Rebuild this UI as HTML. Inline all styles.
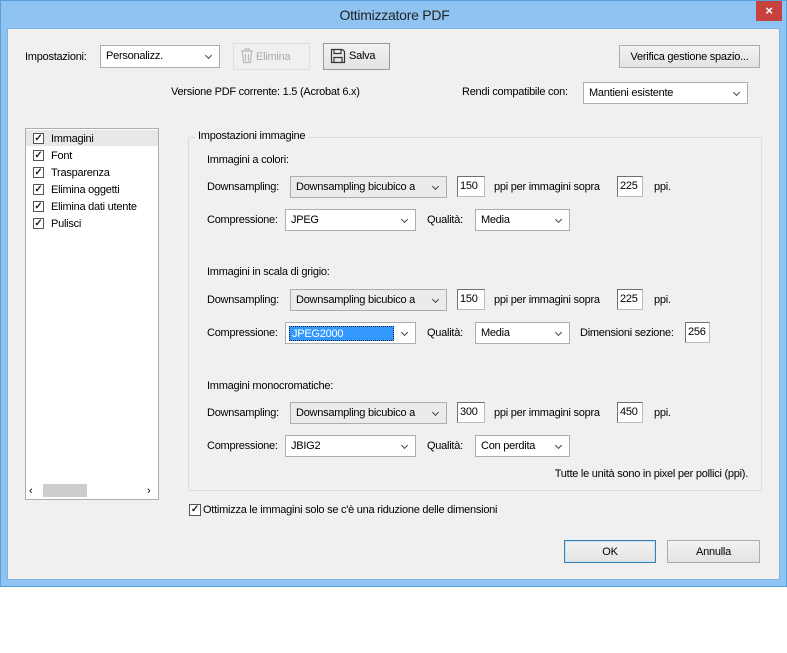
<!DOCTYPE html>
<html><head><meta charset="utf-8"><style>
*{box-sizing:border-box;margin:0;padding:0}
body{width:787px;height:653px;background:#fff;position:relative;overflow:hidden;font-family:"Liberation Sans",sans-serif;font-size:11px;color:#000;letter-spacing:-0.25px}
.win{position:absolute;left:0;top:0;width:787px;height:587px;background:#8fc4f2;border:1px solid #5a9fd8}
.client{position:absolute;left:7px;top:28px;width:773px;height:552px;background:#f0f0f0;border:1px solid #7fb2e0}
.a{position:absolute;white-space:nowrap}
.sel{position:absolute;height:22px;background:#fff;border:1px solid #adadad;padding:4px 0 0 5px}
.sel::after{content:"";position:absolute;right:8px;top:7px;width:4px;height:4px;border-right:1.5px solid #444;border-bottom:1.5px solid #444;transform:rotate(45deg)}
.sel.dis{background:#ebebeb}
.inp{position:absolute;height:21px;background:#fff;border:1px solid #bbb;border-top-color:#707070;border-left-color:#707070;padding:3px 0 0 2px}
.btn{position:absolute;height:23px;background:linear-gradient(#f2f2f2,#e3e3e3);border:1px solid #acacac;text-align:center;padding-top:5px}
.cb{position:absolute;width:11px;height:11px;border:1px solid #555;background:#fff;font-size:10px;line-height:9px;text-align:center;font-weight:bold;color:#222}
</style></head><body>
<div class="win">
<div class="a" style="left:0;width:787px;top:6px;text-align:center;font-size:14px;color:#222">Ottimizzatore PDF</div>
<div class="a" style="left:755px;top:0;width:26px;height:20px;background:#c7423f;color:#fff;text-align:center;font-size:13px;line-height:19px;font-weight:bold">×</div>
</div>
<div class="client"></div>

<div class="a" style="left:25px;top:51px">Impostazioni:</div>
<div class="sel" style="left:100px;top:45px;width:120px;height:23px">Personalizz.</div>
<div class="btn" style="left:233px;top:43px;width:77px;height:27px;color:#aaa;background:#f0f0f0;border-color:#ddd;padding-top:7px;text-align:left;padding-left:6px">
<svg width="14" height="16" style="position:absolute;left:6px;top:4px" viewBox="0 0 14 16"><path d="M1 3h12M5 3V1h4v2M2.5 3.5l1 11h7l1-11M5.5 6v7M8.5 6v7" fill="none" stroke="#bbb" stroke-width="1.2"/></svg><span style="margin-left:16px">Elimina</span></div>
<div class="btn" style="left:323px;top:43px;width:67px;height:27px;text-align:left;padding:6px 0 0 25px;border-color:#999">
<svg width="16" height="16" style="position:absolute;left:6px;top:4px" viewBox="0 0 16 16"><path d="M1.5 1.5h11l2 2v11h-13z M4 1.5v4h7v-4 M4 14.5v-5h8v5" fill="none" stroke="#333" stroke-width="1.2"/></svg>Salva</div>
<div class="btn" style="left:619px;top:45px;width:141px">Verifica gestione spazio...</div>

<div class="a" style="left:171px;top:86px">Versione PDF corrente: 1.5 (Acrobat 6.x)</div>
<div class="a" style="left:462px;top:86px">Rendi compatibile con:</div>
<div class="sel" style="left:583px;top:82px;width:165px">Mantieni esistente</div>

<div class="a" style="left:25px;top:128px;width:134px;height:372px;background:#fff;border:1px solid #abadb3"></div>
<div class="a" style="left:26px;top:130px;width:132px;height:16px;background:#e8e8e8"></div>
<div class="cb" style="left:33px;top:133px">✓</div><div class="a" style="left:51px;top:133px">Immagini</div>
<div class="cb" style="left:33px;top:150px">✓</div><div class="a" style="left:51px;top:150px">Font</div>
<div class="cb" style="left:33px;top:167px">✓</div><div class="a" style="left:51px;top:167px">Trasparenza</div>
<div class="cb" style="left:33px;top:184px">✓</div><div class="a" style="left:51px;top:184px">Elimina oggetti</div>
<div class="cb" style="left:33px;top:201px">✓</div><div class="a" style="left:51px;top:201px">Elimina dati utente</div>
<div class="cb" style="left:33px;top:218px">✓</div><div class="a" style="left:51px;top:218px">Pulisci</div>
<div class="a" style="left:29px;top:485px;font-size:11px">‹</div>
<div class="a" style="left:43px;top:484px;width:44px;height:13px;background:#cdcdcd"></div>
<div class="a" style="left:147px;top:485px;font-size:11px">›</div>

<div class="a" style="left:188px;top:137px;width:574px;height:354px;border:1px solid #dcdcdc;border-radius:2px"></div>
<div class="a" style="left:195px;top:130px;background:#f0f0f0;padding:0 3px">Impostazioni immagine</div>

<div class="a" style="left:207px;top:154px">Immagini a colori:</div>
<div class="a" style="left:207px;top:181px">Downsampling:</div>
<div class="sel dis" style="left:290px;top:176px;width:157px">Downsampling bicubico a</div>
<div class="inp" style="left:457px;top:176px;width:28px">150</div>
<div class="a" style="left:494px;top:181px">ppi per immagini sopra</div>
<div class="inp" style="left:617px;top:176px;width:26px">225</div>
<div class="a" style="left:654px;top:181px">ppi.</div>
<div class="a" style="left:207px;top:214px">Compressione:</div>
<div class="sel" style="left:285px;top:209px;width:131px">JPEG</div>
<div class="a" style="left:427px;top:214px">Qualità:</div>
<div class="sel" style="left:475px;top:209px;width:95px">Media</div>

<div class="a" style="left:207px;top:266px">Immagini in scala di grigio:</div>
<div class="a" style="left:207px;top:294px">Downsampling:</div>
<div class="sel dis" style="left:290px;top:289px;width:157px">Downsampling bicubico a</div>
<div class="inp" style="left:457px;top:289px;width:28px">150</div>
<div class="a" style="left:494px;top:294px">ppi per immagini sopra</div>
<div class="inp" style="left:617px;top:289px;width:26px">225</div>
<div class="a" style="left:654px;top:294px">ppi.</div>
<div class="a" style="left:207px;top:327px">Compressione:</div>
<div class="sel" style="left:285px;top:322px;width:131px;padding:3px 0 0 3px"><span style="background:#3399ff;color:#fff;display:inline-block;width:105px;height:15px;padding:1px 2px;border:1px dotted #123">JPEG2000</span></div>
<div class="a" style="left:427px;top:327px">Qualità:</div>
<div class="sel" style="left:475px;top:322px;width:95px">Media</div>
<div class="a" style="left:580px;top:327px">Dimensioni sezione:</div>
<div class="inp" style="left:685px;top:322px;width:25px">256</div>

<div class="a" style="left:207px;top:380px">Immagini monocromatiche:</div>
<div class="a" style="left:207px;top:407px">Downsampling:</div>
<div class="sel dis" style="left:290px;top:402px;width:157px">Downsampling bicubico a</div>
<div class="inp" style="left:457px;top:402px;width:28px">300</div>
<div class="a" style="left:494px;top:407px">ppi per immagini sopra</div>
<div class="inp" style="left:617px;top:402px;width:26px">450</div>
<div class="a" style="left:654px;top:407px">ppi.</div>
<div class="a" style="left:207px;top:440px">Compressione:</div>
<div class="sel" style="left:285px;top:435px;width:131px">JBIG2</div>
<div class="a" style="left:427px;top:440px">Qualità:</div>
<div class="sel" style="left:475px;top:435px;width:95px">Con perdita</div>

<div class="a" style="right:39px;top:468px">Tutte le unità sono in pixel per pollici (ppi).</div>

<div class="cb" style="left:189px;top:504px;width:12px;height:12px">✓</div>
<div class="a" style="left:203px;top:504px">Ottimizza le immagini solo se c'è una riduzione delle dimensioni</div>

<div class="btn" style="left:564px;top:540px;width:92px;border-color:#3c7fb1;box-shadow:inset 0 0 0 1px #c5e0f5">OK</div>
<div class="btn" style="left:667px;top:540px;width:93px">Annulla</div>
</body></html>
